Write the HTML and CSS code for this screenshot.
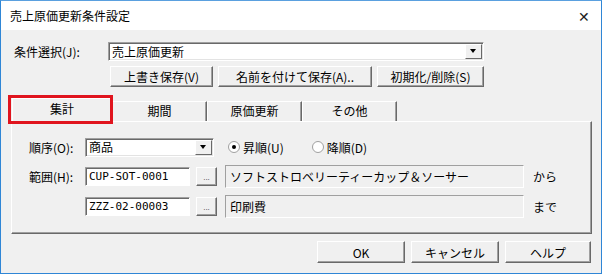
FILE: index.html
```html
<!DOCTYPE html>
<html lang="ja">
<head>
  <meta charset="UTF-8">
  <title>売上原価更新条件設定</title>
  <link rel="stylesheet" href="styles.css">
</head>
<body>
  <div class="window">
    <div class="titlebar">
      <span class="title">売上原価更新条件設定</span>
      <span class="close">&#x2715;</span>
    </div>
    <div class="content">
      <div class="row cond">
        <span class="lbl">条件選択(J):</span>
        <div class="combo combo-wide">
          <span class="combo-text">売上原価更新</span>
          <span class="arrow"></span>
        </div>
      </div>
      <div class="row actions">
        <button class="btn b1">上書き保存(V)</button>
        <button class="btn b2">名前を付けて保存(A)..</button>
        <button class="btn b3">初期化/削除(S)</button>
      </div>

      <div class="tabs">
        <div class="tab active">集計</div>
        <div class="tab">期間</div>
        <div class="tab">原価更新</div>
        <div class="tab">その他</div>
        <div class="highlight"></div>
      </div>
      <div class="panel">
        <div class="row order">
          <span class="lbl2">順序(O):</span>
          <div class="combo combo-small">
            <span class="combo-text">商品</span>
            <span class="arrow"></span>
          </div>
          <label class="radio"><span class="dot checked"></span>昇順(U)</label>
          <label class="radio"><span class="dot"></span>降順(D)</label>
        </div>
        <div class="row range">
          <span class="lbl2">範囲(H):</span>
          <div class="field">CUP-SOT-0001</div>
          <button class="dots">...</button>
          <div class="display">ソフトストロベリーティーカップ＆ソーサー</div>
          <span class="suffix">から</span>
        </div>
        <div class="row range">
          <span class="lbl2"></span>
          <div class="field">ZZZ-02-00003</div>
          <button class="dots">...</button>
          <div class="display">印刷費</div>
          <span class="suffix">まで</span>
        </div>
      </div>

      <div class="footer">
        <button class="btn fb">OK</button>
        <button class="btn fb">キャンセル</button>
        <button class="btn fb help">ヘルプ</button>
      </div>
    </div>
  </div>
</body>
</html>
```

FILE: styles.css
```css
* {
  box-sizing: border-box;
}
body {
  margin: 0;
  font-family: "Noto Sans CJK JP", "Liberation Sans", sans-serif;
  font-size: 12px;
  color: #000;
  background: #fff;
}
.window {
  width: 602px;
  height: 274px;
  border: 1px solid #2f86d6;
  border-top-color: #5aa0df;
  display: flex;
  flex-direction: column;
}
.titlebar {
  height: 29px;
  background: #fff;
  display: flex;
  align-items: center;
  justify-content: space-between;
  padding: 0 10px 0 9px;
}
.title {
  font-size: 12px;
}
.close {
  font-size: 14px;
  color: #222;
  margin-right: 1px;
}
.content {
  flex: 1;
  background: #f0f0f0;
  padding: 12px 0 0 9px;
}
.row {
  display: flex;
  align-items: center;
}
.lbl {
  width: 98px;
  padding-left: 4px;
}
.combo {
  position: relative;
  height: 19px;
  background: #fff;
  border: 1px solid;
  border-color: #a0a0a0 #fff #fff #a0a0a0;
  box-shadow: inset 1px 1px 0 #696969, inset -1px -1px 0 #e3e3e3;
  display: flex;
  align-items: center;
  justify-content: space-between;
  padding-left: 3px;
}
.combo-wide {
  width: 376px;
}
.combo-small {
  width: 129px;
}
.combo-text {
  line-height: 1;
}
.arrow {
  width: 17px;
  height: 15px;
  margin-right: 1px;
  background: #f0f0f0;
  border: 1px solid;
  border-color: #fff #696969 #696969 #fff;
  position: relative;
}
.arrow::after {
  content: "";
  position: absolute;
  left: 4px;
  top: 4px;
  border-left: 3.5px solid transparent;
  border-right: 3.5px solid transparent;
  border-top: 4px solid #000;
}
.actions {
  margin-top: 5px;
  padding-left: 100px;
}
.btn {
  font-family: inherit;
  font-size: 12px;
  height: 21px;
  background: #f0f0f0;
  border: 1px solid;
  border-color: #fff #696969 #696969 #fff;
  box-shadow: inset -1px -1px 0 #a0a0a0;
  padding: 0;
  margin-right: 5px;
}
.b1 {
  width: 103px;
}
.b2 {
  width: 154px;
}
.b3 {
  width: 107px;
}
.tabs {
  position: relative;
  display: flex;
  align-items: flex-end;
  margin-top: 10px;
  padding-left: 2px;
  height: 24px;
}
.tab {
  height: 20px;
  width: 95px;
  text-align: center;
  line-height: 18px;
  border-left: 1px solid #fff;
  border-top: 1px solid #fff;
  border-right: 1px solid #696969;
  box-shadow: inset -1px 0 0 #a0a0a0;
}
.tab.active {
  width: 100px;
  height: 23px;
  line-height: 19px;
  border-right: 1px solid #696969;
}
.highlight {
  position: absolute;
  left: -2px;
  top: -2px;
  width: 105px;
  height: 29px;
  border: 3px solid #e0141e;
}
.panel {
  width: 581px;
  height: 113px;
  margin-left: 1px;
  border: 1px solid;
  border-color: #fff #696969 #696969 #fff;
  box-shadow: inset -1px -1px 0 #a0a0a0;
  padding-top: 15px;
}
.lbl2 {
  width: 73px;
  padding-left: 17px;
}
.order {
  height: 20px;
}
.radio {
  display: flex;
  align-items: center;
  margin-left: 14px;
  margin-right: 15px;
}
.radio + .radio {
  margin-left: 13px;
}
.dot {
  width: 12px;
  height: 12px;
  border-radius: 50%;
  border: 1px solid #a0a0a0;
  background: #fff;
  margin-right: 3px;
  position: relative;
}
.dot.checked::after {
  content: "";
  position: absolute;
  left: 3px;
  top: 3px;
  width: 4px;
  height: 4px;
  border-radius: 50%;
  background: #000;
}
.range {
  margin-top: 9px;
  height: 20px;
}
.range + .range {
  margin-top: 10px;
}
.field {
  width: 105px;
  height: 19px;
  background: #fff;
  border: 1px solid;
  border-color: #a0a0a0 #fff #fff #a0a0a0;
  box-shadow: inset 1px 1px 0 #696969;
  font-family: "DejaVu Sans Mono", monospace;
  font-size: 11px;
  line-height: 17px;
  padding-left: 3px;
}
.dots {
  width: 21px;
  height: 19px;
  margin-left: 6px;
  background: #f0f0f0;
  border: 1px solid;
  border-color: #fff #696969 #696969 #fff;
  box-shadow: inset -1px -1px 0 #a0a0a0;
  font-size: 8px;
  padding: 0;
  line-height: 19px;
  color: #333;
}
.display {
  width: 299px;
  height: 23px;
  margin-left: 8px;
  border: 1px solid;
  border-color: #a0a0a0 #fff #fff #a0a0a0;
  line-height: 21px;
  padding-left: 4px;
}
.suffix {
  margin-left: 9px;
}
.footer {
  display: flex;
  justify-content: flex-end;
  padding-right: 10px;
  margin-top: 7px;
}
.fb {
  width: 88px;
  height: 22px;
  margin: 0 0 0 6px;
}
.fb.help {
  width: 86px;
}
```
